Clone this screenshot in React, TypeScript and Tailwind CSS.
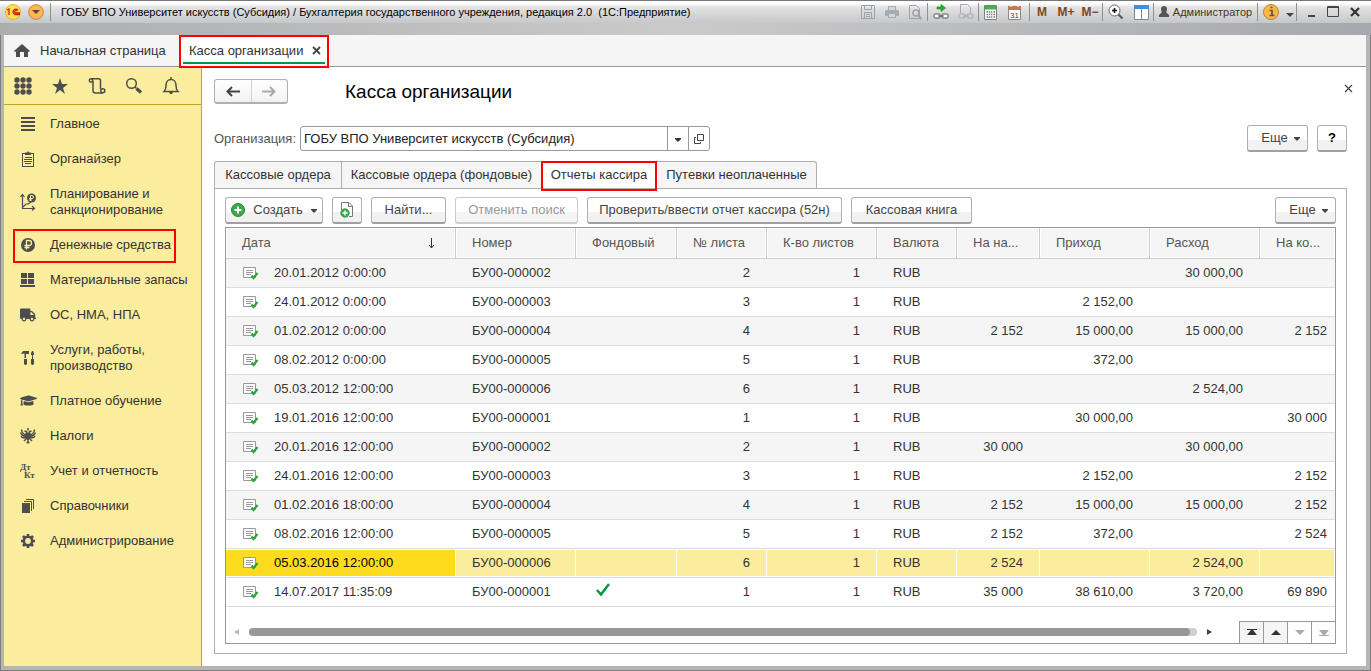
import { useState } from 'react';
import type { ReactNode } from 'react';
import { FaGraduationCap, FaTruck } from 'react-icons/fa';

const Sep = () => <span className="h-[18px] w-px shrink-0 bg-[#8f9093]" />;

const Caret = () => (
  <svg width="6" height="4" viewBox="0 0 6 4" fill="currentColor" className="mt-0.5 shrink-0"><path d="M0 0h6v1L3 4 0 1z" /></svg>
);

const ICON = '#4d4d4d';

const menu: { label: string; tall?: boolean; marked?: boolean; icon: ReactNode }[] = [
  {
    label: 'Главное',
    icon: <svg width="16" height="16" fill={ICON}><path d="M1 1h14v2H1zM1 5h14v2H1zM1 9h14v2H1zM1 13h14v2H1z" /></svg>,
  },
  {
    label: 'Органайзер',
    icon: (
      <svg width="16" height="16" fill={ICON}>
        <path fillRule="evenodd" d="M2 2h12v14H2zM3 3v12h10V3z" />
        <path d="M5 1.500h2L8 0l1 1.500h2V4H5zM5 6h7v1H5zM4 8h8v1H4zM4 10h8v1H4zM5 12h6v1H5z" />
      </svg>
    ),
  },
  {
    label: 'Планирование и санкционирование',
    tall: true,
    icon: (
      <svg width="16" height="18" fill="none" stroke={ICON}>
        <path d="M2.500 2v13.500h12M0.500 4l2-2.500 2 2.500M12 13l2.500 2.500L12 17.500" strokeWidth="1.200" />
        <path d="M3 14l3-3h2l3-2" strokeWidth="1.200" />
        <circle cx="11.500" cy="5" r="4.500" fill={ICON} stroke="none" />
        <path d="M10.500 8V2.500h1.500a1.500 1.500 0 0 1 0 3H9M9 7h3" stroke="#fbed9e" />
      </svg>
    ),
  },
  {
    label: 'Денежные средства',
    marked: true,
    icon: (
      <svg width="16" height="16">
        <circle cx="8" cy="8" r="7" fill={ICON} />
        <path d="M6.500 12.500v-9h2.500a2.500 2.500 0 0 1 0 5H4.500M4.500 10.500h5" fill="none" stroke="#fbed9e" strokeWidth="1.300" />
      </svg>
    ),
  },
  {
    label: 'Материальные запасы',
    icon: <svg width="16" height="16" fill={ICON}><path d="M1 1h6v5H1zM8 1h6v5H8zM1 7h6v5H1zM8 7h6v5H8zM0 13h15v2H0z" /></svg>,
  },
  {
    label: 'ОС, НМА, НПА',
    icon: <FaTruck size={16} color={ICON} />,
  },
  {
    label: 'Услуги, работы, производство',
    tall: true,
    icon: (
      <svg width="16" height="16" fill={ICON}>
        <path d="M1 4l2-3h6v3H6v4H4.500V3.500zM4 9h3v5l-1 1H5l-1-1zM12 1h1l1 2v2h-1v4h-1V5h-1V3zM11 9h3v5l-1 1h-1l-1-1z" />
      </svg>
    ),
  },
  { label: 'Платное обучение', icon: <FaGraduationCap size={17} color={ICON} /> },
  {
    label: 'Налоги',
    icon: (
      <svg width="16" height="16" fill="none" stroke={ICON}>
        <path d="M6.500 6V3.500L4.500 3M9.500 6V3.500l2-.5M8 0v2.500" strokeWidth="1.500" />
        <path d="M7 7C4 7 2 5 1.500 1.500M7 8C4 8.500 1.500 7 .5 4.500M7 9C4 10.500 2 10 1 8M9 7c3 0 5-2 5.500-5.500M9 8c3 .5 5.500-1 6.500-3.500M9 9c3 1.500 5 1 6-1" strokeWidth="1.500" />
        <path d="M6 5h4v5l-2 2-2-2z" fill={ICON} />
        <path d="M7 10l-3 3M9 10l3 3M8 11v4.500M6.500 14.500h3" strokeWidth="1.400" />
      </svg>
    ),
  },
  {
    label: 'Учет и отчетность',
    icon: (
      <svg width="16" height="16" fill={ICON} fontFamily="Liberation Serif, serif" fontWeight="bold" fontSize="9">
        <text x="0" y="7">Дт</text>
        <text x="4" y="15">Кт</text>
      </svg>
    ),
  },
  {
    label: 'Справочники',
    icon: (
      <svg width="16" height="16" fill={ICON}>
        <path d="M2 5h8v10H2z" />
        <path d="M4 3.500h7.500V13M6 1.500h7.500V11" fill="none" stroke={ICON} />
      </svg>
    ),
  },
  {
    label: 'Администрирование',
    icon: (
      <svg width="16" height="16" fill="none" stroke={ICON}>
        <circle cx="8" cy="8" r="4.200" strokeWidth="2.600" />
        <path d="M8 1v3M8 12v3M1 8h3M12 8h3M3 3l2 2M11 11l2 2M3 13l2-2M11 5l2-2" strokeWidth="2.600" />
      </svg>
    ),
  },
];

const columns = [
  { title: 'Дата', width: 'w-[230px]' },
  { title: 'Номер', width: 'w-[120px]' },
  { title: 'Фондовый', width: 'w-[101px]' },
  { title: '№ листа', width: 'w-[90px]' },
  { title: 'К-во листов', width: 'w-[110px]' },
  { title: 'Валюта', width: 'w-[80px]' },
  { title: 'На на...', width: 'w-[83px]' },
  { title: 'Приход', width: 'w-[110px]' },
  { title: 'Расход', width: 'w-[110px]' },
  { title: 'На ко...', width: '' },
];

// date, number, sheet, opening balance, income, expense, closing balance
const rows = [
  ['20.01.2012 0:00:00', 'БУ00-000002', '2', '', '', '30 000,00', ''],
  ['24.01.2012 0:00:00', 'БУ00-000003', '3', '', '2 152,00', '', ''],
  ['01.02.2012 0:00:00', 'БУ00-000004', '4', '2 152', '15 000,00', '15 000,00', '2 152'],
  ['08.02.2012 0:00:00', 'БУ00-000005', '5', '', '372,00', '', ''],
  ['05.03.2012 12:00:00', 'БУ00-000006', '6', '', '', '2 524,00', ''],
  ['19.01.2016 12:00:00', 'БУ00-000001', '1', '', '30 000,00', '', '30 000'],
  ['20.01.2016 12:00:00', 'БУ00-000002', '2', '30 000', '', '30 000,00', ''],
  ['24.01.2016 12:00:00', 'БУ00-000003', '3', '', '2 152,00', '', '2 152'],
  ['01.02.2016 18:00:00', 'БУ00-000004', '4', '2 152', '15 000,00', '15 000,00', '2 152'],
  ['08.02.2016 12:00:00', 'БУ00-000005', '5', '2 152', '372,00', '', '2 524'],
  ['05.03.2016 12:00:00', 'БУ00-000006', '6', '2 524', '', '2 524,00', ''],
  ['14.07.2017 11:35:09', 'БУ00-000001', '1', '35 000', '38 610,00', '3 720,00', '69 890'],
];

const DocIcon = () => (
  <svg width="16" height="14" fill="none" className="shrink-0">
    <path d="M.5 1.500h12v10H.5z" fill="#fff" stroke="#999" />
    <path d="M3 4.500h7M3 6.500h7M3 8.500h5" stroke="#999" />
    <path d="M8.500 9.500l2 2.500 4-5" stroke="#27a83a" strokeWidth="2.200" />
  </svg>
);

const btn =
  'flex h-[27px] shrink-0 items-center justify-center rounded-[3px] border border-[#b0b0b0] border-b-2 border-b-[#a0a0a0] bg-linear-to-b from-white from-60% to-[#f2f2f2] to-60% text-[#444]';

const TitleBar = () => (
  <header className="-mx-px flex h-[35px] flex-col border-t border-[#77777a] bg-linear-to-r from-[#acadaf] via-[#cacaca] to-[#a6a8ad]">
    <div className="flex h-[22px] items-center bg-linear-to-b from-white from-10% via-[#e2e2e2] via-30% to-[#c6c7c9]">
      <button aria-label="Меню 1С" className="ml-[5px]">
        <svg width="16" height="16">
          <circle cx="8" cy="8" r="7.500" fill="#ffe04a" stroke="#e3b72f" />
          <path d="M2 6l2-1v6M13 6a2.800 2.800 0 1 0-3 4.500h5M12 7a1.300 1.300 0 1 0-1 2h4" fill="none" stroke="#d9200f" strokeWidth="1.300" />
        </svg>
      </button>
      <button aria-label="Главное меню" className="ml-[7px]">
        <svg width="16" height="16">
          <circle cx="8" cy="8" r="7.300" fill="#fbb65a" stroke="#c98330" />
          <path d="M4 6h8L8 10z" fill="#5b4630" />
        </svg>
      </button>
      <span className="mr-2.5 ml-1.5 flex"><Sep /></span>
      <span className="min-w-0 flex-1 truncate text-[11px] leading-4 text-black">
        ГОБУ ВПО Университет искусств (Субсидия) / Бухгалтерия государственного учреждения, редакция 2.0&nbsp; (1С:Предприятие)
      </span>
      <div className="flex items-center [&>button]:flex [&>button]:h-5 [&>button]:items-center [&>button]:justify-center">
        <button aria-label="Сохранить" className="w-6">
          <svg width="14" height="14" fill="none" stroke="#9aa3ad">
            <path d="M.5.500h13v13H.5zM3.500.500v4h7v-4M3.500 13.500v-6h7v6M5 9.500h4M5 11.500h4" />
          </svg>
        </button>
        <button aria-label="Печать" className="w-[23px]">
          <svg width="14" height="14" fill="#a5abb3">
            <path d="M3 1h8v4h2l1 1v5h-3v2H3v-2H0V6l1-1h2z" />
            <path d="M4 2h6v3H4zM4 9h6v3H4z" fill="#d4d6d9" />
          </svg>
        </button>
        <button aria-label="Просмотр" className="w-6">
          <svg width="14" height="15" fill="none" stroke="#9aa3ad">
            <path d="M1.500.500h7l3 3v10h-10z" />
            <circle cx="8" cy="8" r="3" strokeWidth="1.500" />
            <path d="M10 10l3.500 4" strokeWidth="2" />
          </svg>
        </button>
        <Sep />
        <button aria-label="Перейти по ссылке" className="w-[26px]">
          <svg width="16" height="16" fill="none">
            <path d="M4 3h4V.500L12.500 4 8 7.500V5H4z" fill="#25b52c" stroke="#12801a" strokeWidth=".6" />
            <rect x="1" y="10" width="6" height="4" rx="1" stroke="#555" fill="#fff" />
            <rect x="9" y="10" width="6" height="4" rx="1" stroke="#555" fill="#fff" />
            <path d="M5 12h6" stroke="#555" />
          </svg>
        </button>
        <button aria-label="Получить ссылку" className="w-6">
          <svg width="16" height="16" fill="none" stroke="#a3a9b0">
            <path d="M2.500 9V.500h7l3 3V9" />
            <rect x="1" y="10" width="6" height="4" rx="1" />
            <rect x="9" y="10" width="6" height="4" rx="1" />
            <path d="M5 12h6" />
          </svg>
        </button>
        <Sep />
        <button aria-label="Калькулятор" className="w-[23px]">
          <svg width="13" height="15">
            <path d="M.5.500h12v14H.5z" fill="#fff" stroke="#70848a" />
            <path d="M1 1h11v3.500H1z" fill="#3db54a" />
            <path d="M2.500 7h6M2.500 9.500h6M2.500 12h6" stroke="#6c7f86" strokeWidth="1.500" strokeDasharray="1.500 .7" />
            <path d="M9.500 7h1.500M9.500 9.500h1.500M9.500 12h1.500" stroke="#d8463a" strokeWidth="1.500" />
          </svg>
        </button>
        <button aria-label="Календарь" className="w-[25px]">
          <svg width="13" height="15">
            <path d="M.5 1.500h12v13H.5z" fill="#fff" stroke="#8a8a8a" />
            <path d="M0 1h13v4H0z" fill="#c07a50" />
            <path d="M3 0v2M10 0v2" stroke="#fff" />
            <text x="2" y="13" fontSize="8" fill="#444" fontFamily="Liberation Sans, sans-serif">31</text>
          </svg>
        </button>
        <span className="ml-0.5 flex"><Sep /></span>
        <button className="w-6 text-[12px] font-bold text-[#7a4a25]">M</button>
        <button className="w-6 text-[12px] font-bold text-[#7a4a25]">M+</button>
        <button className="w-6 text-[12px] font-bold text-[#7a4a25]">M−</button>
        <Sep />
        <button aria-label="Масштаб" className="w-[26px]">
          <svg width="16" height="16" fill="none">
            <circle cx="6.500" cy="6.500" r="5.500" fill="#fff" stroke="#666" />
            <path d="M4 6.500h5M6.500 4v5" stroke="#111" strokeWidth="1.500" />
            <path d="M10.500 10.500l4 4" stroke="#555" strokeWidth="2" />
          </svg>
        </button>
        <button aria-label="Панели" className="w-6">
          <svg width="15" height="15">
            <path d="M.5.500h14v14H.5z" fill="#fff" stroke="#7a8894" />
            <path d="M0 0h15v4H0z" fill="#3d8fe0" />
            <path d="M7.500 4v11" stroke="#7a8894" />
          </svg>
        </button>
        <Sep />
        <button className="mx-1 w-[95px] gap-1 text-[11px] text-[#4b3412]">
          <svg width="10" height="12" fill="#555" className="shrink-0"><path d="M5 0a3 3 0 0 1 3 3c0 1.500-.5 2.500-1 3l3 3v2H0V9l3-3C2.500 5.500 2 4.500 2 3a3 3 0 0 1 3-3z" /></svg>
          Администратор
        </button>
        <Sep />
        <button aria-label="Сведения" className="w-[26px]">
          <svg width="16" height="16">
            <circle cx="8" cy="8" r="7.500" fill="#f9b64c" stroke="#b98437" />
            <path d="M6.500 6.500H9v5M6.500 11.500h5M7.500 3.500h2" stroke="#5d564c" strokeWidth="1.700" fill="none" />
          </svg>
        </button>
        <button aria-label="Ещё команды" className="w-3 pt-1.5">
          <svg width="8" height="4" fill="#444"><path d="M0 0h8L4 4z" /></svg>
        </button>
        <Sep />
        <button aria-label="Свернуть" className="ml-1 w-5"><svg width="12" height="12"><path d="M3 9h7v2H3z" fill="#444" /></svg></button>
        <button aria-label="Развернуть" className="w-6"><svg width="12" height="12"><path d="M.5.500h11v10H.5z M0 1.500h12" fill="none" stroke="#444" /></svg></button>
        <button aria-label="Закрыть окно" className="mr-1.5 w-5"><svg width="10" height="10"><path d="M1 1l8 8M9 1L1 9" stroke="#333" strokeWidth="2.200" /></svg></button>
      </div>
    </div>
  </header>
);

const Sidebar = () => (
  <aside className="w-[198px] shrink-0 border-r border-[#bfa620] bg-[#fbed9e]">
    <div className="flex h-[38px] items-center border-b border-[#bfa620] [&>button]:flex [&>button]:w-[37px] [&>button]:justify-center">
      <button aria-label="Разделы">
        <svg width="18" height="18" fill={ICON}>
          {[3, 9, 15].map((y) => [3, 9, 15].map((x) => <circle key={`${x}-${y}`} cx={x} cy={y} r="2.700" />))}
        </svg>
      </button>
      <button aria-label="Избранное">
        <svg width="18" height="18" fill={ICON}><path d="M9 1l2 6h6l-5 4 2 6-5-4-5 4 2-6-5-4h6z" /></svg>
      </button>
      <button aria-label="История">
        <svg width="18" height="18" fill="none" stroke={ICON} strokeWidth="1.500">
          <circle cx="3" cy="3.500" r="1.700" />
          <path d="M3 1.800h7.500a2 2 0 0 1 2 2V12M5 4v9.500a2.500 2.500 0 0 0 2.500 2.500H15" />
          <circle cx="14.800" cy="13.800" r="2" />
        </svg>
      </button>
      <button aria-label="Поиск">
        <svg width="18" height="18" fill="none" stroke={ICON}>
          <circle cx="6.500" cy="6.500" r="4.800" strokeWidth="1.500" />
          <path d="M10 10l1.500 1.500" strokeWidth="1.400" />
          <path d="M11.500 11.500l4.500 4" strokeWidth="3.200" />
        </svg>
      </button>
      <button aria-label="Оповещения">
        <svg width="18" height="18" fill="none" stroke={ICON} strokeWidth="1.500">
          <path d="M9 0v3M2 14.500c2-2 2-3 2-6C4 5 6 2.500 9 2.500s5 2.500 5 6c0 3 0 4 2 6z" />
          <path d="M7 15h4l-1 2H8z" fill={ICON} stroke="none" />
        </svg>
      </button>
    </div>
    <nav className="pt-px">
      {menu.map((m) => (
        <a
          key={m.label}
          href="#"
          className={`relative flex items-center text-[13px] leading-4 text-[#333] ${m.tall ? 'h-[51px]' : 'h-[35px]'}`}
        >
          <span className="flex w-[46px] shrink-0 justify-center pl-0.5">{m.icon}</span>
          <span className={m.tall ? 'w-[130px]' : 'whitespace-nowrap'}>{m.label}</span>
          {m.marked && <span className="absolute top-0.5 right-[25px] -bottom-px left-[9px] border-2 border-[#f00]" />}
        </a>
      ))}
    </nav>
  </aside>
);

const tabs = [
  { label: 'Кассовые ордера', width: 'w-[128px]' },
  { label: 'Кассовые ордера (фондовые)', width: 'w-[200px]' },
  { label: 'Отчеты кассира', width: 'w-[115px]' },
  { label: 'Путевки неоплаченные', width: 'w-[160px]' },
];

const App = () => {
  const [selected, setSelected] = useState(10);
  const [tab, setTab] = useState(2);
  const [org, setOrg] = useState('ГОБУ ВПО Университет искусств (Субсидия)');

  return (
    <div className="flex min-h-screen flex-col rounded-t-md border-x border-b border-[#7d7d80] bg-[#b4b5b7] font-['Liberation_Sans',Arial,sans-serif] text-[13px] leading-4 text-[#333]">
      <TitleBar />
      <div className="mr-1 mb-1 ml-[3px] flex flex-1 flex-col bg-white">
        <div className="flex h-8 border-b border-[#999] bg-[#f5f5f5]">
          <a href="#" className="flex w-[175px] items-center gap-2.5 pl-2.5 whitespace-nowrap">
            <svg width="16" height="14" fill={ICON} className="shrink-0"><path d="M8 0l8 7-1 1-1-.5V13h-4V8H6v5H2V7.500L1 8 0 7z" /></svg>
            Начальная страница
          </a>
          <div className="relative flex w-[150px] items-center justify-between bg-white pr-2 pl-2.5">
            Касса организации
            <button aria-label="Закрыть вкладку">
              <svg width="9" height="9"><path d="M1 1l7 7M8 1L1 8" stroke="#444" strokeWidth="1.800" /></svg>
            </button>
            <span className="absolute inset-x-1 bottom-[2px] h-0.5 bg-[#009846]" />
            <span className="absolute inset-x-0 top-0 -bottom-0.5 border-2 border-[#f00]" />
          </div>
        </div>

        <div className="flex flex-1">
          <Sidebar />
          <main className="min-w-0 flex-1 pt-3 pr-[19px] pb-3 pl-3">
            <div className="flex items-center">
              <div className="flex h-[25px] w-[74px] rounded-[3px] border border-[#b0b0b0] border-b-2 bg-linear-to-b from-white to-[#f2f2f2]">
                <button aria-label="Назад" className="flex flex-1 items-center justify-center border-r border-[#d0d0d0]">
                  <svg width="14" height="11" fill="none" stroke="#444" strokeWidth="2"><path d="M14 5.500H2M6 1L1.500 5.500 6 10" /></svg>
                </button>
                <button aria-label="Вперед" className="flex flex-1 items-center justify-center">
                  <svg width="14" height="11" fill="none" stroke="#aaa" strokeWidth="2"><path d="M0 5.500h12M8 1l4.500 4.500L8 10" /></svg>
                </button>
              </div>
              <h1 className="ml-[57px] flex-1 text-[19px] leading-6 text-black">Касса организации</h1>
              <button aria-label="Закрыть" className="-mr-1.5 mb-1.5">
                <svg width="9" height="9"><path d="M1 1l7 7M8 1L1 8" stroke="#444" strokeWidth="1.200" /></svg>
              </button>
            </div>

            <div className="mt-[21px] flex h-[27px] items-center">
              <label htmlFor="org" className="w-[86px] shrink-0 text-[#555]">Организация:</label>
              <div className="flex h-[25px] w-[410px] rounded-[3px] border border-[#999] bg-white">
                <input
                  id="org"
                  value={org}
                  onChange={(e) => setOrg(e.target.value)}
                  className="min-w-0 flex-1 rounded-[3px] px-[3px] text-[#222] outline-none"
                />
                <button aria-label="Выбрать" className="flex w-[21px] items-center justify-center border-l border-[#999]"><Caret /></button>
                <button aria-label="Открыть" className="flex w-[21px] items-center justify-center border-l border-[#999]">
                  <svg width="10" height="10" fill="none" stroke="#444"><path d="M3.500.500h6v6h-6zM2 3.500H.5v6h6V8" /></svg>
                </button>
              </div>
              <button className={`${btn} ml-auto w-[61px] gap-1.5 pl-1.5`}>Еще <Caret /></button>
              <button className={`${btn} ml-[9px] w-[30px] font-bold text-black`}>?</button>
            </div>

            <div role="tablist" className="mt-[9px] flex h-[27px]">
              {tabs.map((t, i) => (
                <button
                  key={t.label}
                  role="tab"
                  aria-selected={tab === i}
                  onClick={() => setTab(i)}
                  className={`relative shrink-0 border-t border-r border-[#b0b0b0] whitespace-nowrap first:rounded-tl-[3px] first:border-l last:rounded-tr-[3px] ${t.width} ${tab === i ? 'bg-white' : 'bg-[#f5f5f5]'}`}
                >
                  {t.label}
                  {tab === i && <span className="absolute -inset-x-px -top-px -bottom-[3px] border-2 border-[#f00]" />}
                </button>
              ))}
            </div>

            <div className="border border-[#b0b0b0] px-2.5 pt-2 pb-[9px]">
              <div className="flex gap-[9px]">
                <button className={`${btn} w-[98px] gap-2`}>
                  <svg width="14" height="14" className="shrink-0"><circle cx="7" cy="7" r="6.500" fill="#3aaa4a" stroke="#248a35" /><path d="M7 3.500v7M3.500 7h7" stroke="#fff" strokeWidth="2" /></svg>
                  Создать <Caret />
                </button>
                <button aria-label="Скопировать" className={`${btn} w-[30px]`}>
                  <svg width="14" height="16" fill="none">
                    <path d="M1.500 8V.500H9L12.500 4v10.500H9" stroke="#777" fill="#fff" />
                    <path d="M8.500.500v4h4" stroke="#777" />
                    <circle cx="5" cy="11" r="4.300" fill="#3aaa4a" stroke="#248a35" strokeWidth=".6" />
                    <path d="M5 8.500v5M2.500 11h5" stroke="#fff" strokeWidth="1.400" />
                  </svg>
                </button>
                <button className={`${btn} w-[75px]`}>Найти...</button>
                <button disabled className="h-[27px] w-[123px] shrink-0 rounded-[3px] border border-b-2 border-[#ccc] bg-linear-to-b from-white from-60% to-[#f5f5f5] to-60% text-[#999]">
                  Отменить поиск
                </button>
                <button className={`${btn} w-[255px]`}>Проверить/ввести отчет кассира (52н)</button>
                <button className={`${btn} w-[121px]`}>Кассовая книга</button>
                <button className={`${btn} ml-auto w-[61px] gap-1.5 pl-1.5`}>Еще <Caret /></button>
              </div>

              <div className="mt-[3px] border border-[#999]">
                <table className="w-full table-fixed border-separate border-spacing-0 whitespace-nowrap">
                  <thead>
                    <tr>
                      {columns.map((c, i) => (
                        <th
                          key={c.title}
                          className={`h-[31px] border-b border-[#ccc] bg-[#f5f5f5] pl-4 text-left font-normal text-[#555] shadow-[inset_0_0_0_1px_#fff] not-last:border-r ${c.width}`}
                        >
                          {i === 0 ? (
                            <span className="flex items-center justify-between pr-5">
                              {c.title}
                              <svg width="7" height="11" fill="none" stroke="#333"><path d="M3.500 0v10M1 7l2.500 3L6 7" /></svg>
                            </span>
                          ) : c.title}
                        </th>
                      ))}
                    </tr>
                  </thead>
                  <tbody>
                    {rows.map(([date, num, sheet, open, income, expense, close], i) => (
                      <tr
                        key={date}
                        onClick={() => setSelected(i)}
                        className={`[&>td]:h-[29px] [&>td]:border-b [&>td]:border-[#ddd] ${
                          i === selected
                            ? 'bg-[#fbed9e] [&>td]:shadow-[inset_0_1px_#fff,inset_-1px_-1px_#fff]'
                            : i % 2 ? 'bg-white' : 'bg-[#f5f5f5]'
                        }`}
                      >
                        <td className={`pl-[17px] ${i === selected ? 'bg-[#fddc1f] text-black' : ''}`}>
                          <span className="flex items-center gap-[15px]"><DocIcon />{date}</span>
                        </td>
                        <td className="pl-4">{num}</td>
                        <td className="pl-5">
                          {i === 11 && (
                            <svg width="14" height="13" fill="none" className="mb-1.5"><path d="M1 7l4 4.500L13 1" stroke="#009846" strokeWidth="2.500" /></svg>
                          )}
                        </td>
                        <td className="pr-[17px] text-right">{sheet}</td>
                        <td className="pr-[17px] text-right">1</td>
                        <td className="pl-4">RUB</td>
                        <td className="pr-[17px] text-right">{open}</td>
                        <td className="pr-[17px] text-right">{income}</td>
                        <td className="pr-[17px] text-right">{expense}</td>
                        <td className="pr-2 text-right">{close}</td>
                      </tr>
                    ))}
                  </tbody>
                </table>
                <div className="flex h-9 items-end">
                  <div className="flex h-[22px] flex-1 items-center pr-[27px] pl-2">
                    <svg width="5" height="6" fill="#bbb"><path d="M5 0v6L0 3z" /></svg>
                    <div className="mx-2.5 h-2 flex-1 rounded-full bg-[#d0d0d0] pr-[7px]">
                      <div className="h-2 rounded-full bg-[#999]" />
                    </div>
                    <svg width="5" height="6" fill="#444"><path d="M0 0v6l5-3z" /></svg>
                  </div>
                  <div className="flex h-[22px] border-t border-[#999] [&>button]:flex [&>button]:w-6 [&>button]:items-center [&>button]:justify-center [&>button]:border-l [&>button]:border-[#999]">
                    <button aria-label="В начало" className="bg-[#f5f5f5]"><svg width="10" height="7" fill="#333"><path d="M0 0h10v1H6l4 5H0l4-5H0z" /></svg></button>
                    <button aria-label="Вверх" className="bg-[#f5f5f5]"><svg width="10" height="5" fill="#333"><path d="M5 0l5 5H0z" /></svg></button>
                    <button aria-label="Вниз"><svg width="10" height="5" fill="#aaa"><path d="M5 5l5-5H0z" /></svg></button>
                    <button aria-label="В конец"><svg width="10" height="7" fill="#aaa"><path d="M0 7h10V6H6l4-5H0l4 5H0z" /></svg></button>
                  </div>
                </div>
              </div>
            </div>
          </main>
        </div>
      </div>
    </div>
  );
};

export default App;
